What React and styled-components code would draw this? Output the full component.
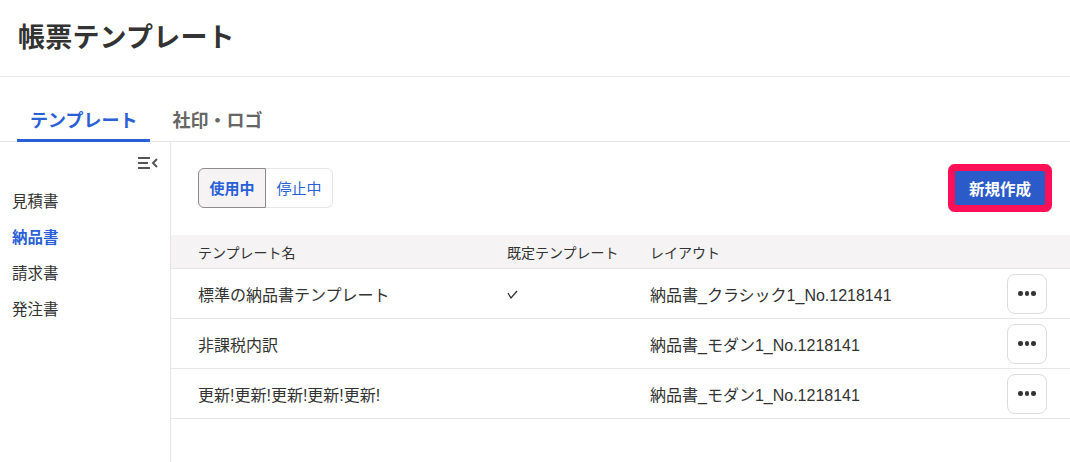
import React from "react";
import styled, { createGlobalStyle } from "styled-components";

const Global = createGlobalStyle`
  html, body { margin: 0; padding: 0; background: #fff; }
  body {
    font-family: "Liberation Sans", "Noto Sans CJK JP", sans-serif;
    color: #333;
  }
  * { box-sizing: border-box; }
`;

const BLUE = "#2a5fd6";
const LINE = "#e6e6e6";

const Page = styled.div`
  width: 1070px;
  height: 462px;
  display: flex;
  flex-direction: column;
  overflow: hidden;
`;

const Header = styled.header`
  height: 77px;
  border-bottom: 1px solid ${LINE};
  display: flex;
  align-items: center;
  padding: 0 0 6px 18px;
`;

const Title = styled.h1`
  margin: 0;
  font-size: 27px;
  font-weight: 700;
  color: #333;
  letter-spacing: 0.2px;
`;

const TabBar = styled.nav`
  display: flex;
  gap: 9px;
  padding: 22px 0 0 17px;
  border-bottom: 1px solid ${LINE};
`;

const Tab = styled.button`
  all: unset;
  height: 40px;
  padding: 0 13px;
  display: flex;
  align-items: center;
  font-size: 18px;
  font-weight: 700;
  color: ${(p) => (p.$active ? BLUE : "#666")};
  border-bottom: 3px solid ${(p) => (p.$active ? BLUE : "transparent")};
  margin-bottom: -1px;
  font-family: "Liberation Sans", "Noto Sans CJK JP", sans-serif;
`;

const Body = styled.div`
  flex: 1;
  display: flex;
`;

const Sidebar = styled.aside`
  width: 171px;
  border-right: 1px solid ${LINE};
  display: flex;
  flex-direction: column;
  padding-top: 14px;
`;

const CollapseRow = styled.div`
  display: flex;
  justify-content: flex-end;
  padding-right: 11px;
  height: 16px;
  margin-bottom: 10px;
`;

const NavItem = styled.div`
  padding-left: 12px;
  height: 36px;
  display: flex;
  align-items: center;
  font-size: 15.5px;
  color: ${(p) => (p.$active ? BLUE : "#333")};
  font-weight: ${(p) => (p.$active ? 700 : 400)};
`;

const Main = styled.main`
  flex: 1;
  display: flex;
  flex-direction: column;
`;

const Toolbar = styled.div`
  display: flex;
  align-items: center;
  justify-content: space-between;
  padding: 25px 25px 27px 27px;
  height: 93px;
`;

const Segmented = styled.div`
  display: flex;
  height: 40px;
`;

const Segment = styled.button`
  all: unset;
  width: 66px;
  display: flex;
  align-items: center;
  justify-content: center;
  font-size: 15px;
  font-family: "Liberation Sans", "Noto Sans CJK JP", sans-serif;
  color: ${BLUE};
  font-weight: ${(p) => (p.$active ? 700 : 400)};
  background: ${(p) => (p.$active ? "#f5f3f4" : "#fff")};
  border: 1px solid ${(p) => (p.$active ? "#8c8c8c" : LINE)};
  border-radius: ${(p) => (p.$first ? "6px 0 0 6px" : "0 6px 6px 0")};
  ${(p) => (p.$first ? "" : "border-left: none;")}
`;

const PrimaryButton = styled.button`
  all: unset;
  width: 90px;
  height: 34px;
  background: #2a5bc8;
  color: #fff;
  font-size: 15.5px;
  font-weight: 700;
  font-family: "Liberation Sans", "Noto Sans CJK JP", sans-serif;
  display: flex;
  align-items: center;
  justify-content: center;
  border-radius: 2px;
  box-shadow: 0 0 0 7px #ff0f57;
  outline: none;
`;

const Row = styled.div`
  display: grid;
  grid-template-columns: 309px 143px 1fr 40px;
  align-items: center;
  padding: 0 23px 0 27px;
  height: ${(p) => (p.$head ? "34px" : "50px")};
  background: ${(p) => (p.$head ? "#f5f3f4" : "#fff")};
  border-bottom: 1px solid ${LINE};
  font-size: ${(p) => (p.$head ? "14px" : "16px")};
  color: #333;
`;

const Cell = styled.div`
  white-space: nowrap;
`;

const MoreButton = styled.button`
  all: unset;
  width: 40px;
  height: 40px;
  box-sizing: border-box;
  border: 1px solid #dcdcdc;
  border-radius: 8px;
  display: flex;
  align-items: center;
  justify-content: center;
  gap: 2px;
`;

const Dot = styled.span`
  width: 4.5px;
  height: 4.5px;
  border-radius: 50%;
  background: #333;
`;

const CollapseIcon = () => (
  <svg width="21" height="14" viewBox="0 0 21 14">
    <g stroke="#555" strokeWidth="2" fill="none">
      <line x1="0" y1="2" x2="12" y2="2" />
      <line x1="0" y1="7" x2="10" y2="7" />
      <line x1="0" y1="12" x2="12" y2="12" />
      <polyline points="19,3 15,7 19,11" />
    </g>
  </svg>
);

const Check = () => (
  <svg width="11" height="9" viewBox="0 0 11 9">
    <polyline points="1,3 4,8 10,1" fill="none" stroke="#333" strokeWidth="1.3" />
  </svg>
);

const rows = [
  { name: "標準の納品書テンプレート", def: true, layout: "納品書_クラシック1_No.1218141" },
  { name: "非課税内訳", def: false, layout: "納品書_モダン1_No.1218141" },
  { name: "更新!更新!更新!更新!更新!", def: false, layout: "納品書_モダン1_No.1218141" },
];

export default function App() {
  return (
    <Page>
      <Global />
      <Header>
        <Title>帳票テンプレート</Title>
      </Header>
      <TabBar>
        <Tab $active>テンプレート</Tab>
        <Tab>社印・ロゴ</Tab>
      </TabBar>
      <Body>
        <Sidebar>
          <CollapseRow>
            <CollapseIcon />
          </CollapseRow>
          <NavItem>見積書</NavItem>
          <NavItem $active>納品書</NavItem>
          <NavItem>請求書</NavItem>
          <NavItem>発注書</NavItem>
        </Sidebar>
        <Main>
          <Toolbar>
            <Segmented>
              <Segment $active $first>使用中</Segment>
              <Segment>停止中</Segment>
            </Segmented>
            <PrimaryButton>新規作成</PrimaryButton>
          </Toolbar>
          <Row $head>
            <Cell>テンプレート名</Cell>
            <Cell>既定テンプレート</Cell>
            <Cell>レイアウト</Cell>
            <Cell />
          </Row>
          {rows.map((r, i) => (
            <Row key={i}>
              <Cell>{r.name}</Cell>
              <Cell>{r.def ? <Check /> : null}</Cell>
              <Cell>{r.layout}</Cell>
              <MoreButton>
                <Dot />
                <Dot />
                <Dot />
              </MoreButton>
            </Row>
          ))}
        </Main>
      </Body>
    </Page>
  );
}
